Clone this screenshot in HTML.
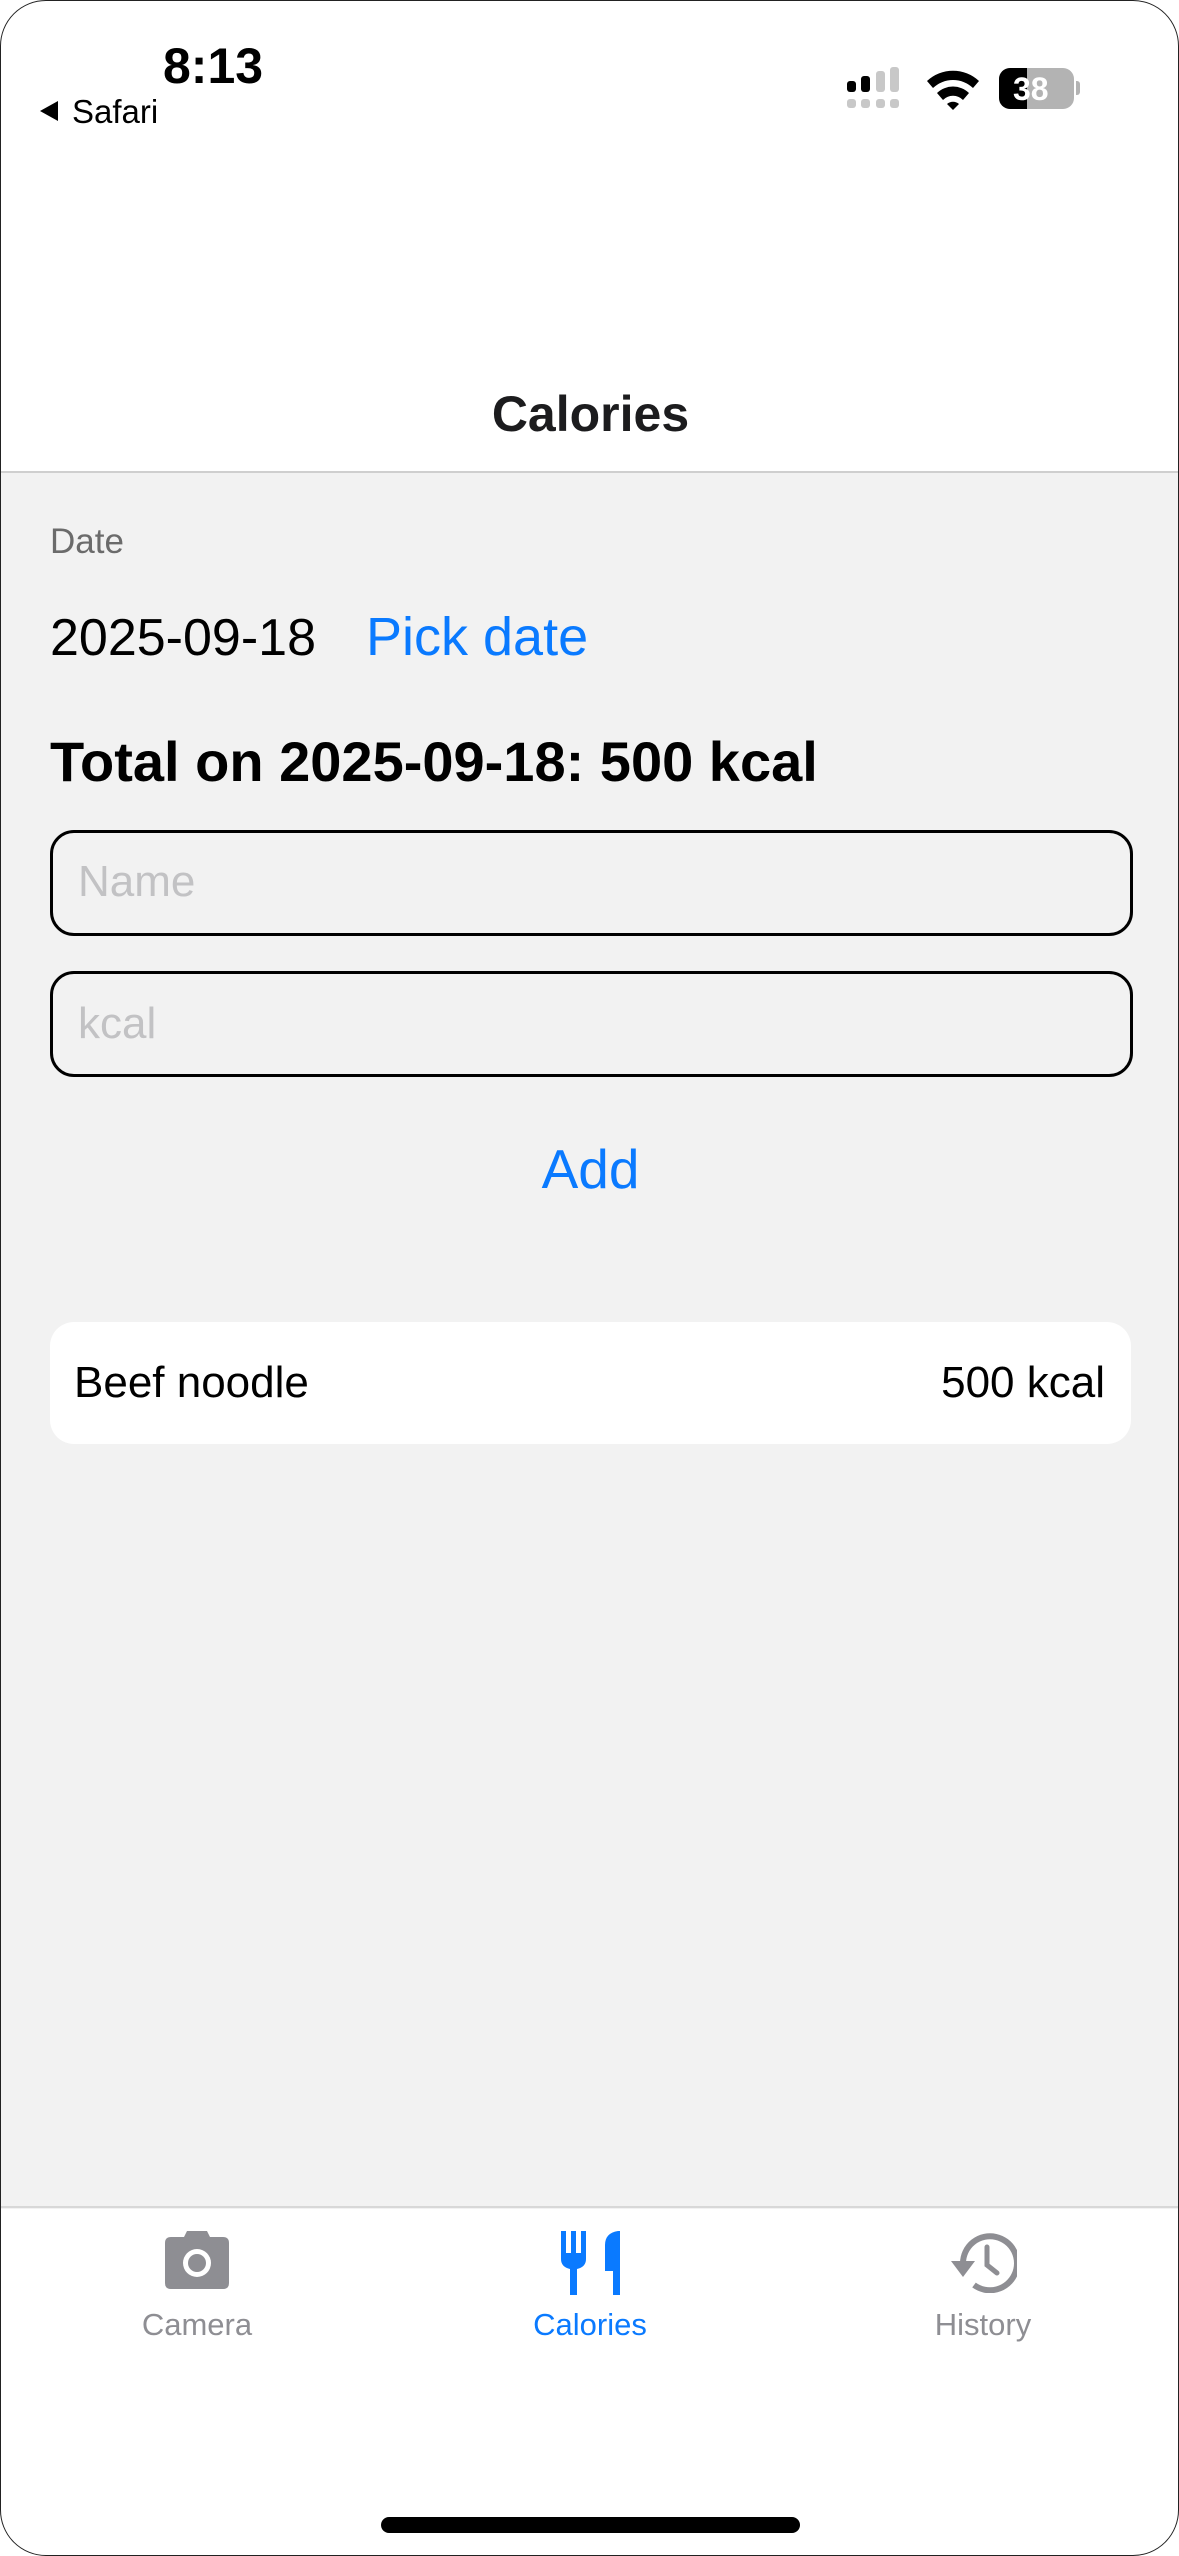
<!DOCTYPE html>
<html><head><meta charset="utf-8"><style>
html,body{margin:0;padding:0;}
body{width:1179px;height:2556px;position:relative;overflow:hidden;background:#fff;font-family:"Liberation Sans",sans-serif;}
.frame{position:absolute;left:0;top:0;width:1177px;height:2554px;border:1px solid #222;border-radius:46px;overflow:hidden;background:#fff;}
.t{position:absolute;line-height:1;white-space:nowrap;}
</style></head><body>
<div class="frame">
  <div class="t" style="left:162px;top:40px;font-size:50px;font-weight:bold;color:#000;">8:13</div>
  <svg style="position:absolute;left:37px;top:99px" width="22" height="22"><polygon points="20,1 20,21 2,11" fill="#000"/></svg>
  <div class="t" style="left:71px;top:94px;font-size:33px;color:#000;">Safari</div>
  <svg style="position:absolute;left:846px;top:66px" width="60" height="44">
    <rect x="0" y="14" width="9" height="11" rx="3" fill="#000"/>
    <rect x="14" y="9" width="9" height="16" rx="3" fill="#000"/>
    <rect x="29" y="4" width="9" height="21" rx="3" fill="#c8c8c8"/>
    <rect x="43" y="0" width="9" height="25" rx="3" fill="#c8c8c8"/>
    <rect x="0" y="32" width="9" height="9" rx="3" fill="#c8c8c8"/>
    <rect x="14" y="32" width="9" height="9" rx="3" fill="#c8c8c8"/>
    <rect x="29" y="32" width="9" height="9" rx="3" fill="#c8c8c8"/>
    <rect x="43" y="32" width="9" height="9" rx="3" fill="#c8c8c8"/>
  </svg>
  <svg style="position:absolute;left:924px;top:66px" width="56" height="44" viewBox="0 0 56 44">
    <path d="M2 14 A38 38 0 0 1 54 14 L48 21 A29 29 0 0 0 8 21 Z" fill="#000"/>
    <path d="M12 26 A23 23 0 0 1 44 26 L38 33 A14 14 0 0 0 18 33 Z" fill="#000"/>
    <path d="M22 37 A9 9 0 0 1 34 37 L28 43 Z" fill="#000"/>
  </svg>
  <div style="position:absolute;left:998px;top:67px;width:75px;height:41px;border-radius:11px;background:#b3b3b3;overflow:hidden;">
    <div style="position:absolute;left:0;top:0;width:28px;height:41px;background:#000;"></div>
    <div class="t" style="left:14px;top:5px;font-size:32px;font-weight:bold;color:#fff;">38</div>
  </div>
  <div style="position:absolute;left:1075px;top:80px;width:4px;height:14px;border-radius:0 3px 3px 0;background:#b3b3b3;"></div>

  <div class="t" style="left:0;width:1179px;text-align:center;top:388px;font-size:50px;font-weight:bold;color:#1c1c1e;">Calories</div>

  <div style="position:absolute;left:0;top:470px;width:1179px;height:1736px;background:#f2f2f2;border-top:2px solid #cfcfcf;"></div>
  <div class="t" style="left:49px;top:523px;font-size:35px;color:#6b6b6b;">Date</div>
  <div class="t" style="left:49px;top:611px;font-size:52px;color:#000;">2025-09-18</div>
  <div class="t" style="left:365px;top:609px;font-size:54px;color:#0a7aff;">Pick date</div>
  <div class="t" style="left:49px;top:733px;font-size:56px;font-weight:bold;color:#000;">Total on 2025-09-18: 500 kcal</div>

  <div style="position:absolute;left:49px;top:829px;width:1077px;height:100px;border:3px solid #000;border-radius:24px;"></div>
  <div class="t" style="left:77px;top:859px;font-size:44px;color:#c2c2c4;">Name</div>
  <div style="position:absolute;left:49px;top:970px;width:1077px;height:100px;border:3px solid #000;border-radius:24px;"></div>
  <div class="t" style="left:77px;top:1001px;font-size:44px;color:#c2c2c4;">kcal</div>

  <div class="t" style="left:0;width:1179px;text-align:center;top:1141px;font-size:55px;color:#0a7aff;">Add</div>

  <div style="position:absolute;left:49px;top:1321px;width:1081px;height:122px;background:#fff;border-radius:24px;"></div>
  <div class="t" style="left:73px;top:1360px;font-size:44px;color:#000;">Beef noodle</div>
  <div class="t" style="right:73px;top:1360px;font-size:44px;color:#000;">500 kcal</div>

  <div style="position:absolute;left:0;top:2205px;width:1179px;height:2px;background:#d8d8d8;"></div>
  <svg style="position:absolute;left:164px;top:2230px" width="64" height="58" viewBox="0 0 64 58">
    <path d="M22 0 H42 L45 6 H58 Q64 6 64 12 V52 Q64 58 58 58 H6 Q0 58 0 52 V12 Q0 6 6 6 H19 Z" fill="#8e8e93"/>
    <circle cx="32" cy="32" r="14" fill="#fff"/>
    <circle cx="32" cy="32" r="9" fill="#8e8e93"/>
  </svg>
  <svg style="position:absolute;left:560px;top:2230px" width="60" height="64" viewBox="0 0 60 64">
    <path d="M0 0 H5 V22 H10 V0 H15 V22 H20 V0 H25 V28 Q25 36 16 38 V64 H9 V38 Q0 36 0 28 Z" fill="#0a7aff"/>
    <path d="M57 0 H59 V64 H52 V40 H44 V14 Q44 2 57 0 Z" fill="#0a7aff"/>
  </svg>
  <svg style="position:absolute;left:946px;top:2232px" width="70" height="60" viewBox="0 0 70 60">
    <path d="M16 30 A27 27 0 1 1 27 52" fill="none" stroke="#8e8e93" stroke-width="6"/>
    <polygon points="4,28 28,28 16,44" fill="#8e8e93"/>
    <path d="M40 14 V32 L50 40" fill="none" stroke="#8e8e93" stroke-width="5" stroke-linecap="round"/>
  </svg>
  <div class="t" style="left:96px;width:200px;text-align:center;top:2308px;font-size:31px;color:#8e8e93;">Camera</div>
  <div class="t" style="left:489px;width:200px;text-align:center;top:2308px;font-size:31px;color:#0a7aff;">Calories</div>
  <div class="t" style="left:882px;width:200px;text-align:center;top:2308px;font-size:31px;color:#8e8e93;">History</div>

  <div style="position:absolute;left:380px;top:2516px;width:419px;height:16px;border-radius:8px;background:#000;"></div>
</div>
</body></html>
